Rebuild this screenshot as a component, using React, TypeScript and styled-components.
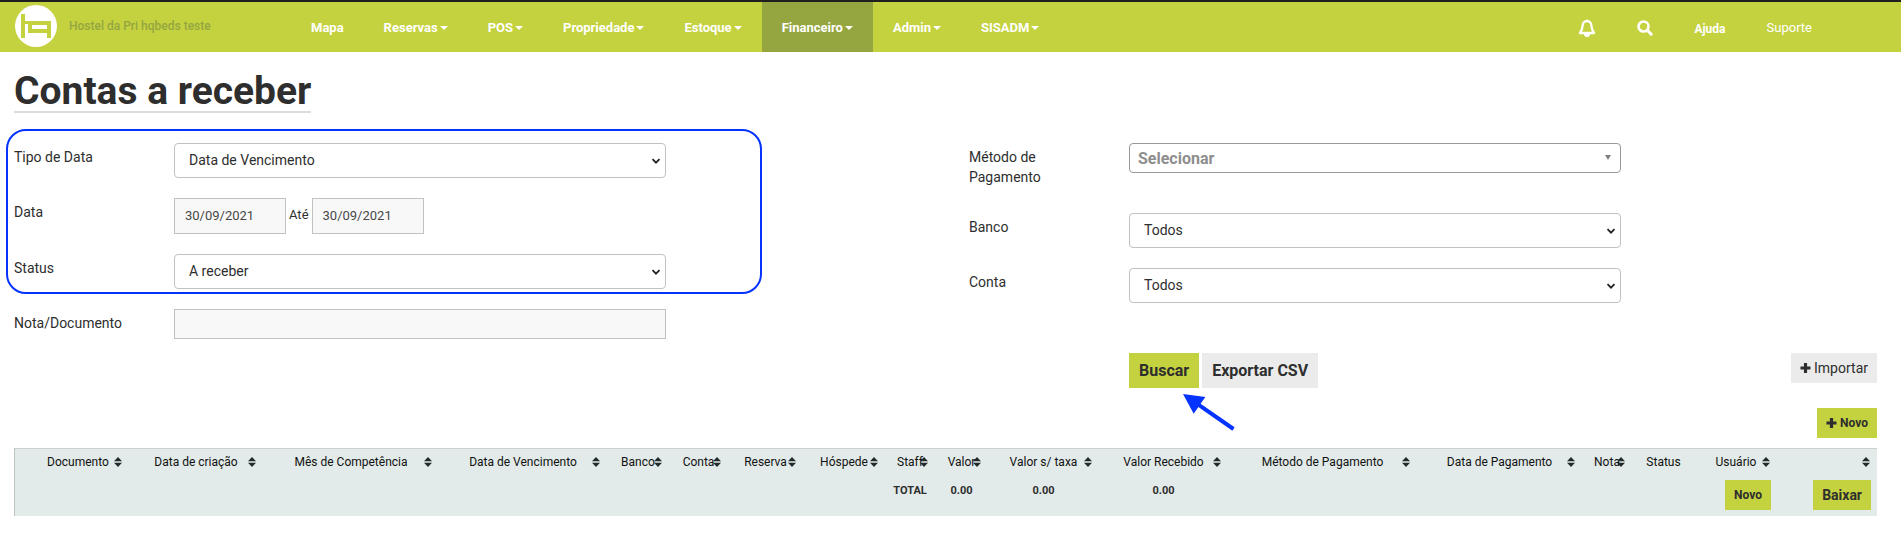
import React, { ReactNode } from 'react';
import styled, { createGlobalStyle, css } from 'styled-components';

const color = {
  green: '#c4d23f',
  olive: '#95a640',
  ink: '#2e2e2e',
  line: '#c1c1c1',
  field: '#f8f8f8',
  grey: '#ebebeb',
  table: '#e2ebe9',
  blue: '#0433ff',
};

const GlobalStyle = createGlobalStyle`
  *, *::before, *::after { box-sizing: border-box; }
  body {
    margin: 0;
    background: #fff;
    color: ${color.ink};
    font: 14px/20px Roboto, "Liberation Sans", sans-serif;
  }
  button, input, select { font-family: inherit; color: inherit; margin: 0; }
`;

const TopBar = styled.header`
  display: flex;
  height: 52px;
  border-top: 2px solid #1f1f1f;
  background: ${color.green};
`;

const Brand = styled.a`
  display: flex;
  flex: 0 0 291px;
  gap: 12px;
  padding: 3px 0 0 15px;
  color: ${color.olive};
  font-size: 12px;
  font-weight: 500;
  line-height: 42px;
  text-decoration: none;
  svg { flex: none; }
`;

const Menu = styled.nav`
  display: flex;
  flex: 1;
`;

const MenuLink = styled.a<{ $active?: boolean }>`
  display: flex;
  align-items: center;
  gap: 2px;
  padding: 2px 20px 0;
  background: ${(p) => (p.$active ? color.olive : 'transparent')};
  color: #fff;
  font-size: 13px;
  font-weight: 700;
  text-decoration: none;
  white-space: nowrap;
`;

const Caret = styled.i`
  border: 4px solid transparent;
  border-top-color: #fff;
  border-bottom: 0;
`;

const Tools = styled.div`
  display: flex;
  align-items: center;
  gap: 41px;
  padding: 2px 89px 0 0;
`;

const ToolLink = styled.a<{ $strong?: boolean }>`
  padding-top: ${(p) => (p.$strong ? 2 : 0)}px;
  color: #fff;
  font-size: ${(p) => (p.$strong ? 12 : 13)}px;
  font-weight: ${(p) => (p.$strong ? 700 : 400)};
  text-decoration: none;
`;

const IconButton = styled.button`
  display: flex;
  padding: 0;
  border: 0;
  background: none;
  cursor: pointer;
`;

const Page = styled.main`
  padding: 20px 24px 24px 14px;
`;

const Title = styled.h1`
  width: fit-content;
  margin: 0 0 30px;
  border-bottom: 2px solid #dcdcdc;
  font-size: 39px;
  font-weight: 700;
  line-height: 39px;
`;

const Filters = styled.form`
  display: grid;
  grid-template-columns: 1fr 1fr;
  column-gap: 47px;
`;

const Column = styled.div`
  display: flex;
  flex-direction: column;
  gap: 20px;
`;

const Highlighted = styled(Column)`
  position: relative;
  max-width: 652px;
  &::after {
    content: '';
    position: absolute;
    inset: -14px -96px -5px -8px;
    border: 2px solid ${color.blue};
    border-radius: 20px;
    pointer-events: none;
  }
`;

const Row = styled.div`
  display: grid;
  grid-template-columns: 160px minmax(0, 492px);
  align-items: start;
`;

const Label = styled.label`
  max-width: 100px;
  padding: 4px 0 6px;
`;

const WideLabel = styled(Label)`
  max-width: none;
`;

const SelectBox = styled.div`
  position: relative;
  svg {
    position: absolute;
    top: 0;
    bottom: 0;
    right: 5px;
    margin: auto 0;
    pointer-events: none;
  }
`;

const Select = styled.select<{ $compact?: boolean }>`
  display: block;
  width: 100%;
  height: 35px;
  padding: 0 14px 2px;
  border: 1px solid ${color.line};
  border-radius: 4px;
  background: #fff;
  font-size: 14px;
  appearance: none;
  ${(p) =>
    p.$compact &&
    css`
      height: 30px;
      padding: 0 8px;
      border-color: #999;
      color: #8e8e8e;
      font-size: 16px;
      font-weight: 700;
    `}
`;

const TextInput = styled.input`
  width: 100%;
  height: 30px;
  padding: 0 10px 2px;
  border: 1px solid ${color.line};
  border-radius: 0;
  background: ${color.field};
  font-size: 13px;
`;

const DateRange = styled.div`
  display: flex;
  gap: 3px;
  font-size: 13px;
  line-height: 34px;
`;

const DateInput = styled(TextInput)`
  width: 112px;
  height: 36px;
  color: #484848;
`;

const Button = styled.button<{ $tone: 'green' | 'grey'; $size?: 'small' | 'large'; $light?: boolean }>`
  display: inline-flex;
  align-items: center;
  justify-content: center;
  gap: 2px;
  height: ${(p) => (p.$size === 'large' ? 35 : 30)}px;
  padding: 0 ${(p) => (p.$size === 'large' ? 10 : 9)}px;
  border: 0;
  background: ${(p) => color[p.$tone]};
  font-size: ${(p) => (p.$size === 'large' ? 16 : p.$size === 'small' ? 12 : 14)}px;
  font-weight: ${(p) => (p.$light ? 400 : 700)};
  white-space: nowrap;
  cursor: pointer;
`;

const Actions = styled.div`
  display: flex;
  align-items: flex-start;
  justify-content: space-between;
  padding: 30px 0 0 160px;
`;

const SearchActions = styled.div`
  position: relative;
  display: flex;
  gap: 3px;
`;

const Pointer = styled.svg`
  position: absolute;
  left: 54px;
  top: 41px;
`;

const NewEntry = styled.div`
  display: flex;
  justify-content: flex-end;
  margin: 20px 0 10px;
`;

const Table = styled.table`
  width: 100%;
  border-left: 1px solid #bdc3c2;
  border-spacing: 0;
  table-layout: fixed;
  background: ${color.table};
`;

const Col = styled.col<{ $width: number }>`
  width: ${(p) => p.$width}px;
`;

const HeadCell = styled.th`
  position: relative;
  height: 26px;
  padding: 0;
  border-top: 1px solid #ccd1d0;
  color: #111;
  font-size: 12px;
  font-weight: 400;
  line-height: 20px;
  white-space: nowrap;
  svg {
    position: absolute;
    top: 8px;
    right: 7px;
  }
`;

const TotalCell = styled.td<{ $right?: boolean }>`
  height: 42px;
  padding: ${(p) => (p.$right ? '6px 6px 6px 0' : '0 0 8px')};
  font-size: 11px;
  font-weight: 700;
  line-height: 20px;
  text-align: ${(p) => (p.$right ? 'right' : 'center')};
  vertical-align: middle;
  white-space: nowrap;
  button { vertical-align: top; }
`;

const Logo = () => (
  <svg width="42" height="42" viewBox="0 0 42 42" aria-hidden="true">
    <circle cx="21" cy="21" r="21" fill="#fff" />
    <path
      fill={color.green}
      fillRule="evenodd"
      d="M6 9h4v7h26v17h-4v-5H13v-9h-3v14H6zM17 20v4h15v-4z"
    />
  </svg>
);

const BellIcon = () => (
  <svg width="18" height="18" viewBox="0 0 18 18" aria-hidden="true">
    <path
      d="M9 2.200c-3 0-4.200 2-4.400 4.500C4.400 10 3.600 12 1.900 14h14.200c-1.700-2-2.500-4-2.700-7.300C13.200 4.200 12 2.200 9 2.200z"
      fill="none"
      stroke="#fff"
      strokeWidth="2.300"
      strokeLinejoin="round"
    />
    <path d="M9 .3v2M6.300 15a2.700 2.700 0 0 0 5.400 0z" fill="#fff" stroke="#fff" />
  </svg>
);

const SearchIcon = () => (
  <svg width="16" height="16" viewBox="0 0 16 16" aria-hidden="true">
    <circle cx="6.500" cy="6.500" r="5" fill="none" stroke="#fff" strokeWidth="2.600" />
    <path d="M10.400 10.400l3.800 3.800" stroke="#fff" strokeWidth="3" strokeLinecap="round" />
  </svg>
);

const PlusIcon = () => (
  <svg width="12" height="12" viewBox="0 0 12 12" aria-hidden="true">
    <path d="M5.500 .5v10M.5 5.500h10" transform="translate(0 .5)" stroke={color.ink} strokeWidth="3.200" />
  </svg>
);

const Chevron = () => (
  <svg width="10" height="8" viewBox="0 0 10 8" aria-hidden="true">
    <path d="M1.500 2.200L5 5.700l3.500-3.500" fill="none" stroke="#222" strokeWidth="1.800" />
  </svg>
);

const Triangle = () => (
  <svg width="15" height="10" viewBox="0 0 15 10" aria-hidden="true">
    <path d="M4 2h6L7 7z" fill="#808080" />
  </svg>
);

const SortIcon = () => (
  <svg width="8" height="10" viewBox="0 0 8 10" aria-hidden="true">
    <path d="M4 0l4 4.200H0zM4 10l4-4.200H0z" fill="#222b29" />
  </svg>
);

const menu = [
  { label: 'Mapa', plain: true },
  { label: 'Reservas' },
  { label: 'POS' },
  { label: 'Propriedade' },
  { label: 'Estoque' },
  { label: 'Financeiro', active: true },
  { label: 'Admin' },
  { label: 'SISADM' },
];

type ColumnDef = { label: string; width: number; sort?: boolean; total?: ReactNode; right?: boolean };

const columns: ColumnDef[] = [
  { label: '', width: 12 },
  { label: 'Documento', width: 102, sort: true },
  { label: 'Data de criação', width: 134, sort: true },
  { label: 'Mês de Competência', width: 176, sort: true },
  { label: 'Data de Vencimento', width: 168, sort: true },
  { label: 'Banco', width: 62, sort: true },
  { label: 'Conta', width: 59, sort: true },
  { label: 'Reserva', width: 75, sort: true },
  { label: 'Hóspede', width: 82, sort: true },
  { label: 'Staff', width: 50, sort: true, total: 'TOTAL' },
  { label: 'Valor', width: 53, sort: true, total: '0.00' },
  { label: 'Valor s/ taxa', width: 111, sort: true, total: '0.00' },
  { label: 'Valor Recebido', width: 129, sort: true, total: '0.00' },
  { label: 'Método de Pagamento', width: 189, sort: true },
  { label: 'Data de Pagamento', width: 165, sort: true },
  { label: 'Nota', width: 50, sort: true },
  { label: 'Status', width: 63 },
  {
    label: 'Usuário',
    width: 82,
    sort: true,
    right: true,
    total: <Button type="button" $tone="green" $size="small">Novo</Button>,
  },
  {
    label: '',
    width: 100,
    sort: true,
    right: true,
    total: <Button type="button" $tone="green">Baixar</Button>,
  },
];

const SelectRow = ({ id, label, value }: { id: string; label: string; value: string }) => (
  <Row>
    <Label htmlFor={id}>{label}</Label>
    <SelectBox>
      <Select id={id}>
        <option>{value}</option>
      </Select>
      <Chevron />
    </SelectBox>
  </Row>
);

export default function App() {
  return (
    <>
      <GlobalStyle />
      <TopBar>
        <Brand href="#">
          <Logo />
          Hostel da Pri hqbeds teste
        </Brand>
        <Menu>
          {menu.map((item) => (
            <MenuLink key={item.label} href="#" $active={item.active}>
              {item.label}
              {!item.plain && <Caret />}
            </MenuLink>
          ))}
        </Menu>
        <Tools>
          <IconButton type="button" aria-label="Notificações"><BellIcon /></IconButton>
          <IconButton type="button" aria-label="Pesquisar"><SearchIcon /></IconButton>
          <ToolLink href="#" $strong>Ajuda</ToolLink>
          <ToolLink href="#">Suporte</ToolLink>
        </Tools>
      </TopBar>

      <Page>
        <Title>Contas a receber</Title>

        <Filters>
          <Column>
            <Highlighted>
              <SelectRow id="tipo" label="Tipo de Data" value="Data de Vencimento" />
              <Row>
                <Label htmlFor="de">Data</Label>
                <DateRange>
                  <DateInput id="de" defaultValue="30/09/2021" />
                  <label htmlFor="ate">Até</label>
                  <DateInput id="ate" defaultValue="30/09/2021" />
                </DateRange>
              </Row>
              <SelectRow id="status" label="Status" value="A receber" />
            </Highlighted>
            <Row>
              <WideLabel htmlFor="nota">Nota/Documento</WideLabel>
              <TextInput id="nota" />
            </Row>
          </Column>

          <Column>
            <Row>
              <Label htmlFor="metodo">Método de Pagamento</Label>
              <SelectBox>
                <Select id="metodo" $compact>
                  <option>Selecionar</option>
                </Select>
                <Triangle />
              </SelectBox>
            </Row>
            <SelectRow id="banco" label="Banco" value="Todos" />
            <SelectRow id="conta" label="Conta" value="Todos" />
            <Actions>
              <SearchActions>
                <Button type="button" $tone="green" $size="large">Buscar</Button>
                <Button type="button" $tone="grey" $size="large">Exportar CSV</Button>
                <Pointer width="53" height="38" viewBox="0 0 53 38" aria-hidden="true">
                  <path d="M0 0l22.300 3-11.600 16.700z" fill={color.blue} />
                  <path d="M15 10.300L50.500 35" stroke={color.blue} strokeWidth="4" />
                </Pointer>
              </SearchActions>
              <Button type="button" $tone="grey" $light><PlusIcon />Importar</Button>
            </Actions>
          </Column>
        </Filters>

        <NewEntry>
          <Button type="button" $tone="green" $size="small"><PlusIcon />Novo</Button>
        </NewEntry>

        <Table>
          <colgroup>
            {columns.map((c, i) => <Col key={i} $width={c.width} />)}
          </colgroup>
          <thead>
            <tr>
              {columns.map((c, i) => (
                <HeadCell key={i} scope="col">
                  {c.label}
                  {c.sort && <SortIcon />}
                </HeadCell>
              ))}
            </tr>
          </thead>
          <tbody>
            <tr>
              {columns.map((c, i) => (
                <TotalCell key={i} $right={c.right}>{c.total}</TotalCell>
              ))}
            </tr>
          </tbody>
        </Table>
      </Page>
    </>
  );
}
